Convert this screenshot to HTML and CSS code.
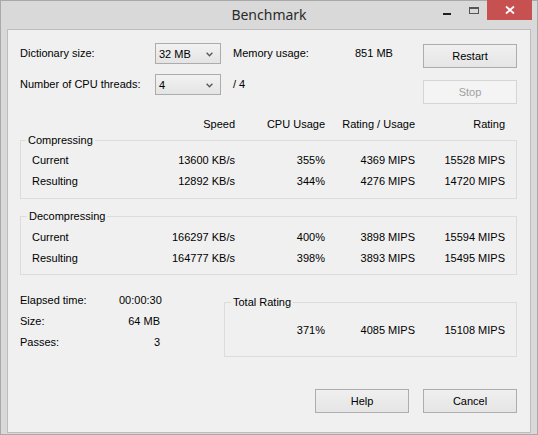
FILE: index.html
```html
<!DOCTYPE html>
<html>
<head>
<meta charset="utf-8">
<title>Benchmark</title>
<link rel="stylesheet" href="styles.css">
</head>
<body>
<div class="window">
  <div class="titlebar">
    <div></div>
    <div class="title">Benchmark</div>
    <div class="caption-btns">
      <div class="cap min"><svg width="26" height="20" viewBox="0 0 26 20"><rect x="9" y="13" width="8" height="2" fill="#1e1e1e"/></svg></div>
      <div class="cap max"><svg width="27" height="20" viewBox="0 0 27 20"><rect x="9.5" y="7.5" width="9" height="6" fill="none" stroke="#555" stroke-width="1"/><line x1="9" y1="8.5" x2="19" y2="8.5" stroke="#555" stroke-width="1"/></svg></div>
      <div class="cap close"><svg width="45" height="20" viewBox="0 0 45 20"><path d="M19 6.5 L27 13.5 M27 6.5 L19 13.5" stroke="#fff" stroke-width="1.7" fill="none"/></svg></div>
    </div>
  </div>
  <div class="client">
    <div class="top">
      <div class="settings">
        <span>Dictionary size:</span>
        <div class="cell"><div class="combo"><span>32 MB</span><svg width="7" height="5" viewBox="0 0 7 5"><polyline points="0.6,0.8 3.5,3.8 6.4,0.8" fill="none" stroke="#5a5a5a" stroke-width="1.4"/></svg></div></div>
        <span>Memory usage:</span>
        <span>851 MB</span>
        <span>Number of CPU threads:</span>
        <div class="cell"><div class="combo"><span>4</span><svg width="7" height="5" viewBox="0 0 7 5"><polyline points="0.6,0.8 3.5,3.8 6.4,0.8" fill="none" stroke="#5a5a5a" stroke-width="1.4"/></svg></div></div>
        <span>/ 4</span>
        <span></span>
      </div>
      <div class="actions">
        <button class="btn">Restart</button>
        <button class="btn" disabled>Stop</button>
      </div>
    </div>

    <div class="heads">
      <span></span>
      <span class="r">Speed</span>
      <span class="r">CPU Usage</span>
      <span class="r">Rating / Usage</span>
      <span class="r">Rating</span>
    </div>

    <fieldset class="group comp">
      <legend class="lg5">Compressing</legend>
      <div class="rows">
        <span>Current</span><span class="r">13600 KB/s</span><span class="r">355%</span><span class="r">4369 MIPS</span><span class="r">15528 MIPS</span>
        <span>Resulting</span><span class="r">12892 KB/s</span><span class="r">344%</span><span class="r">4276 MIPS</span><span class="r">14720 MIPS</span>
      </div>
    </fieldset>

    <fieldset class="group decomp">
      <legend class="lg6">Decompressing</legend>
      <div class="rows rows-d">
        <span>Current</span><span class="r">166297 KB/s</span><span class="r">400%</span><span class="r">3898 MIPS</span><span class="r">15594 MIPS</span>
        <span>Resulting</span><span class="r">164777 KB/s</span><span class="r">398%</span><span class="r">3893 MIPS</span><span class="r">15495 MIPS</span>
      </div>
    </fieldset>

    <div class="bottom">
      <div class="stats">
        <span>Elapsed time:</span><span class="r">00:00:30</span>
        <span>Size:</span><span class="r">64 MB</span>
        <span>Passes:</span><span class="r">3</span>
      </div>
      <fieldset class="group total">
        <legend class="lg6">Total Rating</legend>
        <div class="total-row">
          <span class="r">371%</span><span class="r">4085 MIPS</span><span class="r">15108 MIPS</span>
        </div>
      </fieldset>
    </div>

    <div class="footer">
      <button class="btn">Help</button>
      <button class="btn">Cancel</button>
    </div>
  </div>
</div>
</body>
</html>
```
FILE: styles.css
```css
html, body {
  margin: 0;
  padding: 0;
  background: #d9d9d9;
}
body {
  font-family: "Liberation Sans", Arial, sans-serif;
  font-size: 11px;
  line-height: 13px;
  color: #000;
}
.window {
  box-sizing: border-box;
  width: 538px;
  height: 435px;
  background: #d9d9d9;
  border: 1px solid #a9a9a9;
  display: flex;
  flex-direction: column;
}
.titlebar {
  height: 28px;
  flex: none;
  display: grid;
  grid-template-columns: 1fr auto 1fr;
  align-items: start;
}
.title {
  font-family: "Noto Sans", "Open Sans", sans-serif;
  font-size: 14px;
  line-height: 18px;
  margin-top: 5px;
  color: #2b2b2b;
}
.caption-btns {
  justify-self: end;
  display: flex;
  margin-right: 5px;
  margin-top: -1px;
}
.cap {
  height: 20px;
  display: flex;
}
.cap svg { display: block; }
.min { width: 26px; }
.max { width: 27px; }
.close { width: 45px; background: #c75050; }

.client {
  box-sizing: border-box;
  height: 404px;
  margin: 0 6px;
  border: 1px solid #bdbdbd;
  background: #f0f0f0;
  padding: 13px 13px 19px 12px;
  display: flex;
  flex-direction: column;
}

.top {
  display: flex;
  justify-content: space-between;
  align-items: flex-start;
}
.settings {
  display: grid;
  grid-template-columns: 135px 78px 122px 68px;
  grid-auto-rows: 21px;
  row-gap: 10px;
  align-items: center;
}
.cell { display: flex; }
.combo {
  box-sizing: border-box;
  width: 66px;
  height: 21px;
  border: 1px solid #acacac;
  background: linear-gradient(#f2f2f2, #e4e4e4);
  display: flex;
  align-items: center;
  justify-content: space-between;
  padding: 1px 7px 0 3px;
}
.combo svg { display: block; margin-top: 1px; }
.actions {
  display: flex;
  flex-direction: column;
  gap: 12px;
  margin-top: 1px;
}
.btn {
  box-sizing: border-box;
  width: 94px;
  height: 24px;
  margin: 0;
  padding: 0;
  border: 1px solid #adadad;
  border-radius: 0;
  background: linear-gradient(#f0f0f0, #e5e5e5);
  font: inherit;
  color: #000;
}
.btn:disabled {
  border-color: #d5d5d5;
  background: #f4f4f4;
  color: #a0a0a0;
}

.r { text-align: right; }

.heads {
  display: grid;
  grid-template-columns: 125px repeat(4, 90px);
  margin-top: 14px;
}

.group {
  margin: 0;
  padding: 0;
  min-width: 0;
  border: 1px solid #dcdcdc;
  border-radius: 0;
}
.group legend {
  padding: 0 2px;
  line-height: 13px;
}
.lg5 { margin-left: 5px; }
.lg6 { margin-left: 6px; }
.comp { margin-top: 3px; }
.decomp { margin-top: 11px; }

.rows {
  display: grid;
  grid-template-columns: 113px repeat(4, 90px);
  grid-auto-rows: 21px;
  align-items: center;
  padding: 3px 11px 6px 11px;
}
.rows-d { padding-top: 4px; padding-bottom: 5px; }

.bottom {
  display: flex;
  align-items: flex-start;
  margin-top: 15px;
}
.stats {
  display: grid;
  grid-template-columns: 99px 41px;
  grid-auto-rows: 21px;
  align-items: center;
  margin-top: 0;
}
.total {
  box-sizing: border-box;
  width: 293px;
  margin-top: 6px;
  margin-left: 64px;
}
.total-row {
  display: grid;
  grid-template-columns: 100px 90px 90px;
  grid-auto-rows: 21px;
  align-items: center;
  padding: 11px 11px 15px 0;
}

.footer {
  margin-top: auto;
  display: flex;
  justify-content: flex-end;
  gap: 14px;
}
```
